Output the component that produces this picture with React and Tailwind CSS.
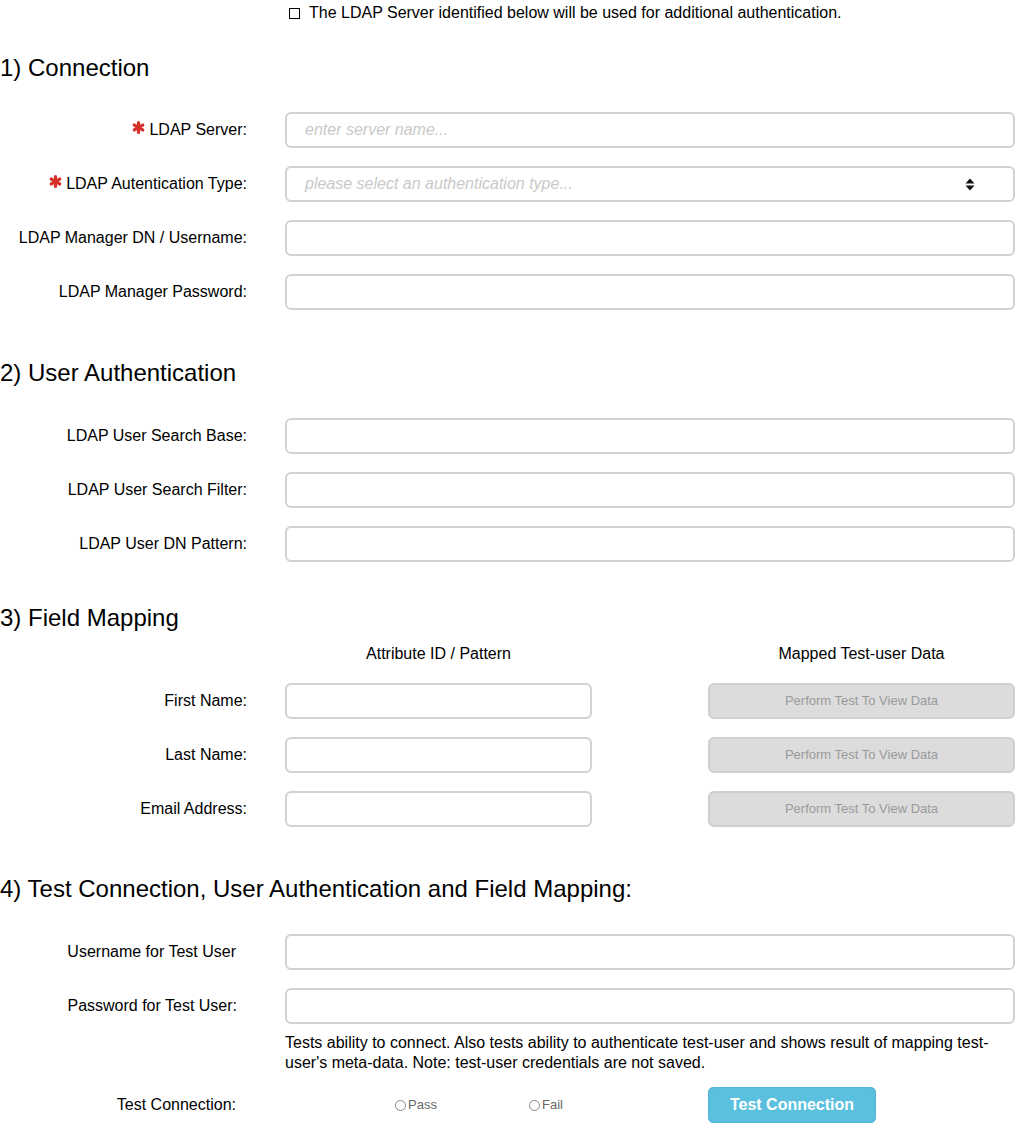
const font = { fontFamily: '"Liberation Sans", Arial, sans-serif' }

function Star() {
  return (
    <svg width="13" height="13" viewBox="0 0 12 12" className="mr-[4px] -mt-[6px]">
      <g stroke="#d6302a" strokeWidth="3" strokeLinecap="round">
        <line x1="6" y1="1.5" x2="6" y2="10.5" />
        <line x1="2.1" y1="3.75" x2="9.9" y2="8.25" />
        <line x1="2.1" y1="8.25" x2="9.9" y2="3.75" />
      </g>
    </svg>
  )
}

function Heading({ children, className = '' }) {
  return <h2 className={`text-[24px] leading-[28px] text-black ${className}`}>{children}</h2>
}

function Row({ label, required, placeholder, select, pr = 'pr-0', className = '' }) {
  return (
    <div className={`flex items-center h-[36px] ${className}`}>
      <div className={`w-[247px] flex items-center justify-end text-[16px] text-black ${pr}`}>
        {required && <Star />}
        <span>{label}</span>
      </div>
      <div className="ml-[38px] mr-[1px] flex-1 h-[36px] rounded-[6px] border-2 border-[#d2d2d2] bg-white flex items-center pl-[18px] pr-[36px] relative">
        {placeholder && (
          <span className="italic text-[16px] text-[#c9c9c9]">{placeholder}</span>
        )}
        {select && (
          <svg width="10" height="13" viewBox="0 0 10 13" className="absolute right-[38px] top-[10px]">
            <path d="M5 0.5 L9.5 5.5 H0.5 Z" fill="#111" />
            <path d="M5 12.5 L9.5 7.5 H0.5 Z" fill="#111" />
          </svg>
        )}
      </div>
    </div>
  )
}

function MapRow({ label, className = '' }) {
  return (
    <div className={`flex items-center h-[36px] ${className}`}>
      <div className="w-[247px] text-right text-[16px] text-black">{label}</div>
      <div className="ml-[38px] w-[307px] h-[36px] rounded-[6px] border-2 border-[#d2d2d2] bg-white" />
      <div className="ml-[116px] w-[307px] h-[36px] rounded-[6px] border-2 border-[#cfcfcf] bg-[#dcdcdc] flex items-center justify-center text-[13px] text-[#9a9a9a]">
        Perform Test To View Data
      </div>
    </div>
  )
}

function Radio({ label }) {
  return (
    <label className="flex items-center text-[13px] text-[#666]">
      <span className="w-[11px] h-[11px] rounded-full border border-[#888] bg-white mr-[2px]" />
      {label}
    </label>
  )
}

export default function App() {
  return (
    <div className="w-[1016px] bg-white pt-[1px] pb-[1px]" style={font}>
      <div className="h-[24px] flex items-center pl-[289px] text-[16px] text-black">
        <span className="w-[11px] h-[11px] border border-black mr-[9px]" />
        <span>The LDAP Server identified below will be used for additional authentication.</span>
      </div>

      <Heading className="mt-[29px]">1) Connection</Heading>
      <div className="mt-[30px] flex flex-col gap-[18px]">
        <Row label="LDAP Server:" required placeholder="enter server name..." />
        <Row label="LDAP Autentication Type:" required placeholder="please select an authentication type..." select />
        <Row label="LDAP Manager DN / Username:" />
        <Row label="LDAP Manager Password:" />
      </div>

      <Heading className="mt-[49px]">2) User Authentication</Heading>
      <div className="mt-[31px] flex flex-col gap-[18px]">
        <Row label="LDAP User Search Base:" />
        <Row label="LDAP User Search Filter:" />
        <Row label="LDAP User DN Pattern:" />
      </div>

      <Heading className="mt-[42px]">3) Field Mapping</Heading>
      <div className="mt-[12px] flex h-[20px] items-center text-[16px] text-black">
        <div className="ml-[285px] w-[307px] text-center">Attribute ID / Pattern</div>
        <div className="ml-[116px] w-[307px] text-center">Mapped Test-user Data</div>
      </div>
      <div className="mt-[19px] flex flex-col gap-[18px]">
        <MapRow label="First Name:" />
        <MapRow label="Last Name:" />
        <MapRow label="Email Address:" />
      </div>

      <Heading className="mt-[48px]">4) Test Connection, User Authentication and Field Mapping:</Heading>
      <div className="mt-[31px] flex flex-col gap-[18px]">
        <Row label="Username for Test User" pr="pr-[11px]" />
        <Row label="Password for Test User:" pr="pr-[10px]" />
      </div>
      <p className="mt-[9px] ml-[285px] mr-[1px] text-[16px] leading-[20px] text-black">
        Tests ability to connect. Also tests ability to authenticate test-user and shows result of mapping test-user's meta-data. Note: test-user credentials are not saved.
      </p>
      <div className="mt-[14px] flex items-center h-[36px]">
        <div className="w-[247px] text-right pr-[11px] text-[16px] text-black">Test Connection:</div>
        <div className="ml-[148px] w-[134px]">
          <Radio label="Pass" />
        </div>
        <div className="w-[179px]">
          <Radio label="Fail" />
        </div>
        <button className="w-[168px] h-[36px] rounded-[5px] bg-[#5bc0de] border border-[#4fb6d6] text-white font-bold text-[16px]">
          Test Connection
        </button>
      </div>
    </div>
  )
}
